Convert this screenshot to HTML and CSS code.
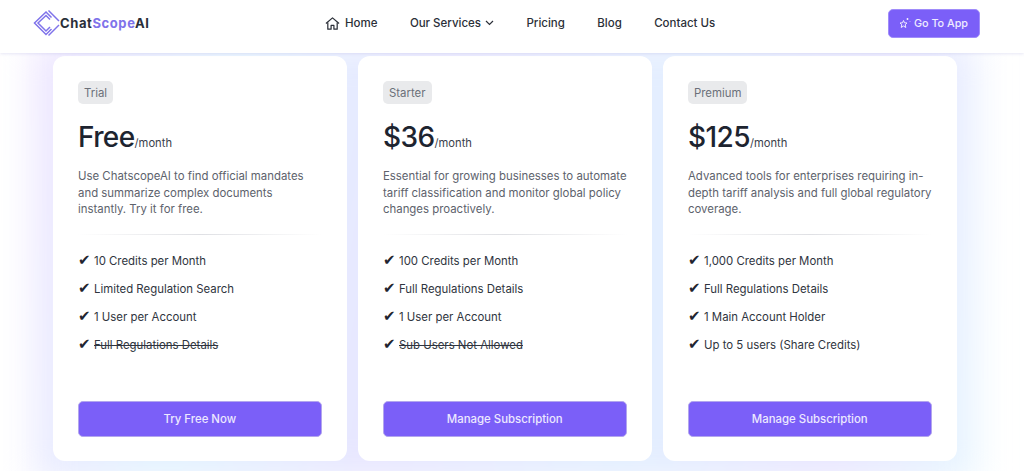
FILE: index.html
```html
<!DOCTYPE html>
<html lang="en">
<head>
  <meta charset="UTF-8">
  <title>Pricing - ChatScopeAI</title>
  <meta name="viewport" content="width=device-width, initial-scale=1.0">
  <link rel="stylesheet" href="styles.css">
</head>
<body>

  <!-- NAVBAR -->
  <header>
    <a class="logo" href="#">
      <svg class="logo-mark" width="28" height="28" viewBox="0 0 28 28" fill="none" stroke="#7f73ea" stroke-width="1.5">
        <path d="M19.5 8.5 14 3 2.5 14 14 25.5 19.5 20"/>
        <path d="M18 10.5 14 6.5 6 14 14 22 18 18"/>
        <path d="M16.5 1.5 27 12"/>
        <path d="M16.5 26.5 27 16"/>
      </svg>
      <span>Chat<em>Scope</em>AI</span>
    </a>
    <nav>
      <a href="#" class="nav-home">
        <svg width="15" height="15" viewBox="0 0 16 16" fill="none" stroke="#2b2f38" stroke-width="1.3" stroke-linejoin="round">
          <path d="M1 8 8 2l7 6"/>
          <path d="M3 7v7h3.5v-4h3v4H13V7"/>
        </svg>
        Home
      </a>
      <a href="#" class="nav-services">
        Our Services
        <svg width="9" height="6" viewBox="0 0 9 6" fill="none" stroke="#2b2f38" stroke-width="1.2">
          <path d="M1 1l3.5 3.5L8 1"/>
        </svg>
      </a>
      <a href="#">Pricing</a>
      <a href="#">Blog</a>
      <a href="#">Contact Us</a>
    </nav>
    <a href="#" class="btn-app">
      <svg width="12" height="12" viewBox="0 0 12 12" fill="none" stroke="#f0ecff" stroke-width="1">
        <path d="M4.5 3.5 5.5 5.8 8 6 6.2 7.7 6.8 10.5 4.5 9 2.2 10.5 2.8 7.7 1 6 3.5 5.8Z"/>
        <path d="M8.5 1v2M7.5 2h2M11 4.5v.5"/>
      </svg>
      Go To App
    </a>
  </header>

  <!-- PRICING -->
  <main>
    <div class="glow"></div>
    <div class="plans">

      <section class="plan">
        <span class="tag">Trial</span>
        <h2>Free<small>/month</small></h2>
        <p class="desc">Use ChatscopeAI to find official mandates and summarize complex documents instantly. Try it for free.</p>
        <hr>
        <ul>
          <li>10 Credits per Month</li>
          <li>Limited Regulation Search</li>
          <li>1 User per Account</li>
          <li class="off"><s>Full Regulations Details</s></li>
        </ul>
        <a href="#" class="btn-plan">Try Free Now</a>
      </section>

      <section class="plan">
        <span class="tag">Starter</span>
        <h2>$36<small>/month</small></h2>
        <p class="desc">Essential for growing businesses to automate tariff classification and monitor global policy changes proactively.</p>
        <hr>
        <ul>
          <li>100 Credits per Month</li>
          <li>Full Regulations Details</li>
          <li>1 User per Account</li>
          <li class="off"><s>Sub Users Not Allowed</s></li>
        </ul>
        <a href="#" class="btn-plan">Manage Subscription</a>
      </section>

      <section class="plan">
        <span class="tag">Premium</span>
        <h2>$125<small>/month</small></h2>
        <p class="desc">Advanced tools for enterprises requiring in-depth tariff analysis and full global regulatory coverage.</p>
        <hr>
        <ul>
          <li>1,000 Credits per Month</li>
          <li>Full Regulations Details</li>
          <li>1 Main Account Holder</li>
          <li>Up to 5 users (Share Credits)</li>
        </ul>
        <a href="#" class="btn-plan">Manage Subscription</a>
      </section>

    </div>
  </main>

</body>
</html>
```

FILE: styles.css
```css
body {
  margin: 0;
  height: 471px;
  overflow: hidden;
  font-family: Inter, "Liberation Sans", sans-serif;
  background-color: #fff;
  color: #1f2530;
}

a {
  text-decoration: none;
  color: inherit;
}

/* NAVBAR */
header {
  position: relative;
  z-index: 2;
  height: 53px;
  box-sizing: border-box;
  display: flex;
  align-items: center;
  padding: 0 44px 7px 32px;
  background-color: #fff;
  box-shadow: 0 1px 3px rgba(120, 120, 200, 0.18);
}

.logo {
  display: flex;
  align-items: center;
  gap: 0;
  width: 293px;
  font-size: 13px;
  font-weight: 700;
  letter-spacing: 0.6px;
  color: #2a2f3a;
}

.logo em {
  font-style: normal;
  color: #7f73ea;
}

nav {
  display: flex;
  align-items: center;
  gap: 32.4px;
  font-size: 11.5px;
  font-weight: 500;
  color: #2b2f38;
}

nav a {
  display: flex;
  align-items: center;
}

.nav-home {
  gap: 5px;
}

.nav-services {
  gap: 4px;
}

.btn-app {
  margin-left: auto;
  display: flex;
  align-items: center;
  gap: 3px;
  height: 29px;
  box-sizing: border-box;
  padding: 0 11px 0 10px;
  font-size: 10.8px;
  font-weight: 500;
  color: #f0ecff;
  background-color: #7b5ff8;
  border: 1px solid #a08cfa;
  border-radius: 5px;
}

/* PRICING */
main {
  position: relative;
  height: 418px;
  overflow: hidden;
}

.glow {
  position: absolute;
  top: -10px;
  left: 34px;
  width: 942px;
  height: 440px;
  background: linear-gradient(100deg, #eee4ff 0%, #e3f3ff 20%, #e8e6ff 40%, #e3efff 65%, #e9e6ff 85%, #e6f6ff 100%);
  filter: blur(18px);
}

.plans {
  position: relative;
  display: grid;
  grid-template-columns: repeat(3, 293.5px);
  gap: 11.5px;
  padding: 3px 0 0 53px;
}

.plan {
  height: 405px;
  box-sizing: border-box;
  display: flex;
  flex-direction: column;
  align-items: flex-start;
  padding: 25px 25px 24px;
  background-color: #fff;
  border-radius: 12px;
}

.tag {
  padding: 1px 6px 0;
  height: 23px;
  box-sizing: border-box;
  line-height: 23px;
  font-size: 11.4px;
  color: #6b7079;
  background-color: #e9eaec;
  border-radius: 5px;
}

.plan h2 {
  margin: 16px 0 0;
  height: 34px;
  line-height: 34px;
  font-size: 28px;
  font-weight: 500;
  letter-spacing: -0.6px;
  color: #1d2430;
}

.plan h2 small {
  font-size: 11.2px;
  font-weight: 400;
  letter-spacing: 0;
  color: #3a404b;
}

.desc {
  margin: 14px -1px 0 0;
  font-size: 11.4px;
  line-height: 16.5px;
  color: #5d626c;
}

.plan hr {
  align-self: stretch;
  height: 1px;
  margin: 16px 0 0;
  border: none;
  background: linear-gradient(90deg, transparent, #dfe0e4 50%, transparent);
}

.plan ul {
  list-style: none;
  margin: 12px 0 0;
  padding: 0;
  font-size: 11.4px;
  color: #2f3540;
}

.plan li {
  height: 28px;
  line-height: 28px;
}

.plan li::before {
  content: "✔";
  display: inline-block;
  width: 16px;
  font-family: "DejaVu Sans", sans-serif;
  font-size: 15px;
  line-height: 20px;
  color: #1f2530;
}

.plan li.off s {
  text-decoration-thickness: 1px;
}

.btn-plan {
  margin-top: auto;
  align-self: stretch;
  height: 36px;
  line-height: 34px;
  box-sizing: border-box;
  text-align: center;
  font-size: 11.4px;
  font-weight: 500;
  color: #ece8ff;
  background-color: #7b5ff8;
  border: 1px solid #b3a6ee;
  border-radius: 5px;
}
```
